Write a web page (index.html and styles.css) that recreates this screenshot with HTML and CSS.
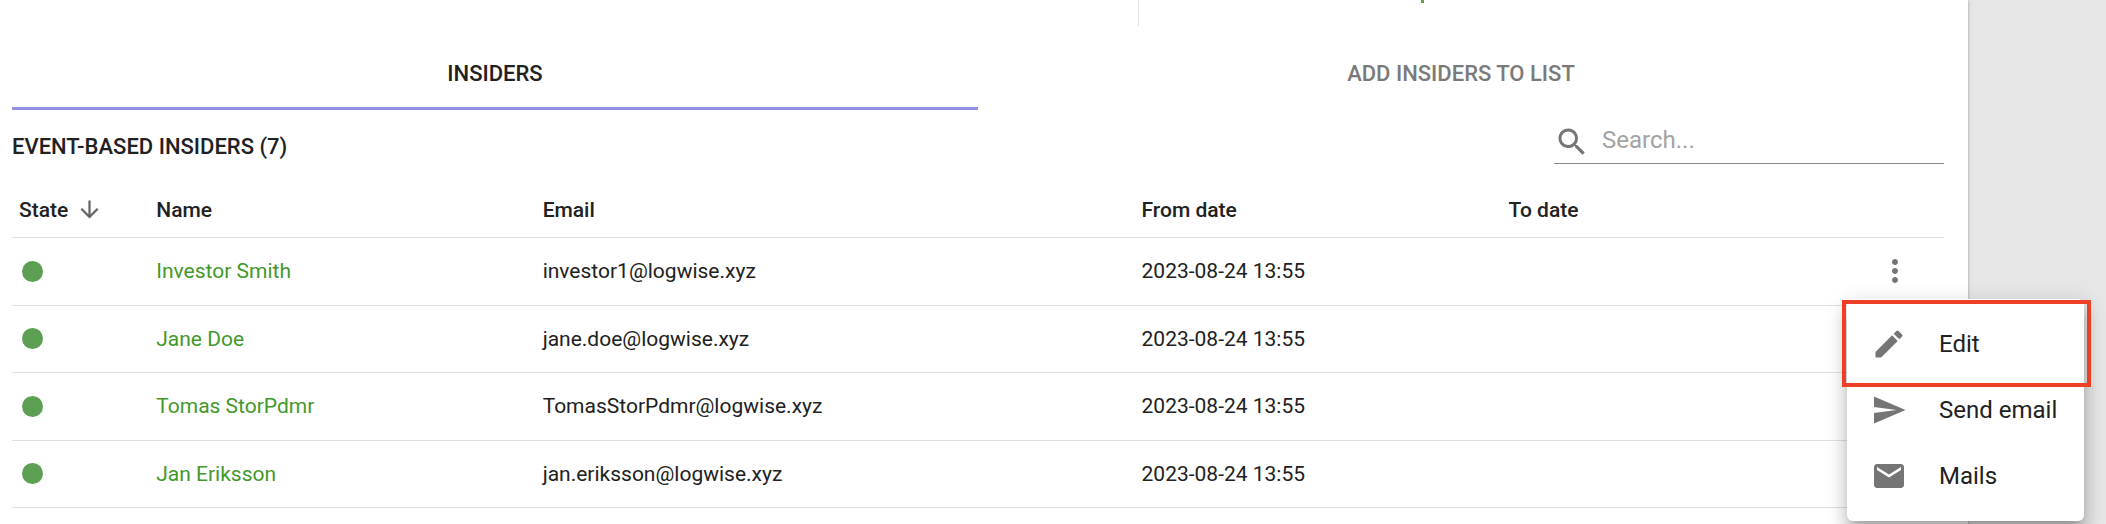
FILE: index.html
```html
<!DOCTYPE html>
<html lang="en">
<head>
<meta charset="utf-8">
<title>Insiders</title>
<link rel="stylesheet" href="styles.css">
</head>
<body>
<svg class="sprite" aria-hidden="true">
  <symbol id="more" viewBox="0 0 24 24"><path d="M12 8c1.1 0 2-.9 2-2s-.9-2-2-2-2 .9-2 2 .9 2 2 2zm0 2c-1.1 0-2 .9-2 2s.9 2 2 2 2-.9 2-2-.9-2-2-2zm0 6c-1.1 0-2 .9-2 2s.9 2 2 2 2-.9 2-2-.9-2-2-2z"/></symbol>
</svg>
<main class="card">
  <div class="summary">
    <div class="summary-left"></div>
    <div class="summary-right"><span class="summary-mark"></span></div>
  </div>
  <div class="tabs" role="tablist">
    <button class="tab tab-active" role="tab" aria-selected="true">INSIDERS</button>
    <button class="tab" role="tab" aria-selected="false">ADD INSIDERS TO LIST</button>
  </div>
  <div class="toolbar">
    <h2 class="title">EVENT-BASED INSIDERS (7)</h2>
    <label class="search">
      <svg class="icon" viewBox="0 0 24 24" aria-hidden="true"><path d="M15.5 14h-.79l-.28-.27C15.41 12.59 16 11.11 16 9.5 16 5.91 13.09 3 9.5 3S3 5.91 3 9.5 5.91 16 9.5 16c1.61 0 3.09-.59 4.23-1.57l.27.28v.79l5 4.99L20.49 19l-4.99-5zm-6 0C7.01 14 5 11.99 5 9.5S7.01 5 9.5 5 14 7.01 14 9.5 11.99 14 9.5 14z"/></svg>
      <input class="search-input" type="text" placeholder="Search..." aria-label="Search">
    </label>
  </div>
  <table class="table">
    <colgroup><col class="col-state"><col class="col-name"><col class="col-email"><col class="col-from"><col></colgroup>
    <thead>
      <tr>
        <th><button class="sort">State<svg class="sort-icon" viewBox="0 0 24 24" aria-hidden="true"><path d="M20 12l-1.41-1.41L13 16.17V4h-2v12.17l-5.58-5.59L4 12l8 8 8-8z"/></svg></button></th>
        <th>Name</th><th>Email</th><th>From date</th><th>To date</th>
      </tr>
    </thead>
    <tbody>
      <tr>
        <td><span class="dot"></span></td>
        <td><a class="link" href="#">Investor Smith</a></td>
        <td>investor1@logwise.xyz</td>
        <td>2023-08-24 13:55</td>
        <td class="actions">
          <button class="more" aria-label="Actions"><svg class="icon"><use href="#more"/></svg></button>
          <div class="menu" role="menu">
            <button class="menu-item" role="menuitem"><svg class="icon" viewBox="0 0 24 24" aria-hidden="true"><path d="M3 17.25V21h3.75L17.81 9.94l-3.75-3.75L3 17.25zM20.71 7.04c.39-.39.39-1.02 0-1.41l-2.34-2.34a.9959.9959 0 0 0-1.41 0l-1.83 1.83 3.75 3.75 1.83-1.83z"/></svg>Edit</button>
            <button class="menu-item" role="menuitem"><svg class="icon" viewBox="0 0 24 24" aria-hidden="true"><path d="M2.01 21L23 12 2.01 3 2 10l15 2-15 2z"/></svg>Send email</button>
            <button class="menu-item" role="menuitem"><svg class="icon" viewBox="0 0 24 24" aria-hidden="true"><path d="M20 4H4c-1.1 0-1.99.9-1.99 2L2 18c0 1.1.9 2 2 2h16c1.1 0 2-.9 2-2V6c0-1.1-.9-2-2-2zm0 4l-8 5-8-5V6l8 5 8-5v2z"/></svg>Mails</button>
            <span class="highlight"></span>
          </div>
        </td>
      </tr>
      <tr>
        <td><span class="dot"></span></td>
        <td><a class="link" href="#">Jane Doe</a></td>
        <td>jane.doe@logwise.xyz</td>
        <td>2023-08-24 13:55</td>
        <td class="actions"><button class="more" aria-label="Actions"><svg class="icon"><use href="#more"/></svg></button></td>
      </tr>
      <tr>
        <td><span class="dot"></span></td>
        <td><a class="link" href="#">Tomas StorPdmr</a></td>
        <td>TomasStorPdmr@logwise.xyz</td>
        <td>2023-08-24 13:55</td>
        <td class="actions"><button class="more" aria-label="Actions"><svg class="icon"><use href="#more"/></svg></button></td>
      </tr>
      <tr>
        <td><span class="dot"></span></td>
        <td><a class="link" href="#">Jan Eriksson</a></td>
        <td>jan.eriksson@logwise.xyz</td>
        <td>2023-08-24 13:55</td>
        <td class="actions"><button class="more" aria-label="Actions"><svg class="icon"><use href="#more"/></svg></button></td>
      </tr>
    </tbody>
  </table>
</main>
</body>
</html>
```
FILE: styles.css
```css
* { box-sizing: border-box; }

body {
  margin: 0;
  background: #e6e6e6;
  color: #212121;
  font-family: Roboto, "Liberation Sans", sans-serif;
  font-size: 21px;
  line-height: 30px;
}

button {
  margin: 0;
  padding: 0;
  border: 0;
  background: none;
  color: inherit;
  font: inherit;
  cursor: pointer;
}

.sprite { display: none; }

.icon {
  display: block;
  flex: none;
  width: 36px;
  height: 36px;
  fill: #757575;
}

.card {
  min-height: 100vh;
  margin-right: 138px;
  padding: 0 24px 0 12px;
  background: #fff;
  box-shadow: 0 1px 3px rgba(0, 0, 0, 0.35);
}

.summary {
  display: flex;
  height: 26px;
  margin-bottom: 12px;
}

.summary-left {
  flex: 7;
  border-right: 1px solid #e0e0e0;
}

.summary-right { flex: 5; }

.summary-mark {
  display: block;
  width: 3px;
  height: 3px;
  margin-left: 35%;
  background: #5aa545;
}

.tabs { display: flex; }

.tab {
  flex: 1;
  height: 72px;
  border-top: 3px solid transparent;
  border-bottom: 3px solid transparent;
  color: #7a7a7a;
  font-size: 22px;
  font-weight: 500;
}

.tab-active {
  border-bottom-color: #9191e4;
  color: #212121;
}

.toolbar {
  display: flex;
  justify-content: space-between;
  align-items: flex-start;
  height: 72px;
}

.title {
  margin: 0;
  padding-top: 22px;
  font-size: 22px;
  font-weight: 500;
}

.search {
  display: flex;
  align-items: flex-start;
  width: 390px;
  margin-top: 14px;
  padding-bottom: 3px;
  border-bottom: 1px solid #8c8c8c;
}

.search-input {
  flex: 1;
  min-width: 0;
  height: 32px;
  margin-left: 12px;
  padding: 0;
  border: 0;
  outline: 0;
  background: none;
  color: #212121;
  font: inherit;
  font-size: 24px;
}

.search-input::placeholder {
  color: #a3a3a3;
  opacity: 1;
}

.table {
  width: 100%;
  table-layout: fixed;
  border-collapse: separate;
  border-spacing: 0;
}

.col-state { width: 7%; }
.col-name { width: 20%; }
.col-email { width: 31%; }
.col-from { width: 19%; }

.table th,
.table td {
  padding: 0 9px;
  border-bottom: 1px solid #e0e0e0;
  text-align: left;
  vertical-align: middle;
}

.table th:first-child { padding-left: 7px; }

.table th {
  height: 56px;
  font-weight: 500;
}

.table td {
  height: 68px;
  padding-bottom: 1px;
}

.table tr:nth-child(even) td { height: 67px; }

.sort {
  display: flex;
  align-items: center;
  gap: 8px;
}

.sort-icon {
  width: 27px;
  height: 27px;
  fill: #666;
}

.dot {
  display: block;
  width: 21px;
  height: 21px;
  margin-left: 1px;
  border-radius: 50%;
  background: #5c9f53;
}

.link {
  color: #43982a;
  text-decoration: none;
}

.table .actions {
  position: relative;
  padding: 0 19px 1px 0;
}

.more {
  display: block;
  margin-left: auto;
  padding: 12px;
}

.menu {
  position: absolute;
  z-index: 1;
  top: 61px;
  right: -140px;
  width: 237px;
  padding: 12px 0;
  border-radius: 6px;
  background: #fff;
  box-shadow:
    0 8px 8px -5px rgba(0, 0, 0, 0.2),
    0 12px 15px 2px rgba(0, 0, 0, 0.14),
    0 5px 21px 3px rgba(0, 0, 0, 0.12);
}

.menu-item {
  display: flex;
  align-items: center;
  gap: 32px;
  width: 100%;
  height: 66px;
  padding: 0 24px;
  font-size: 24px;
  white-space: nowrap;
}

.highlight {
  position: absolute;
  top: 1px;
  left: -5px;
  right: -7px;
  height: 87px;
  border: 4px solid #ee4026;
  pointer-events: none;
}
```
